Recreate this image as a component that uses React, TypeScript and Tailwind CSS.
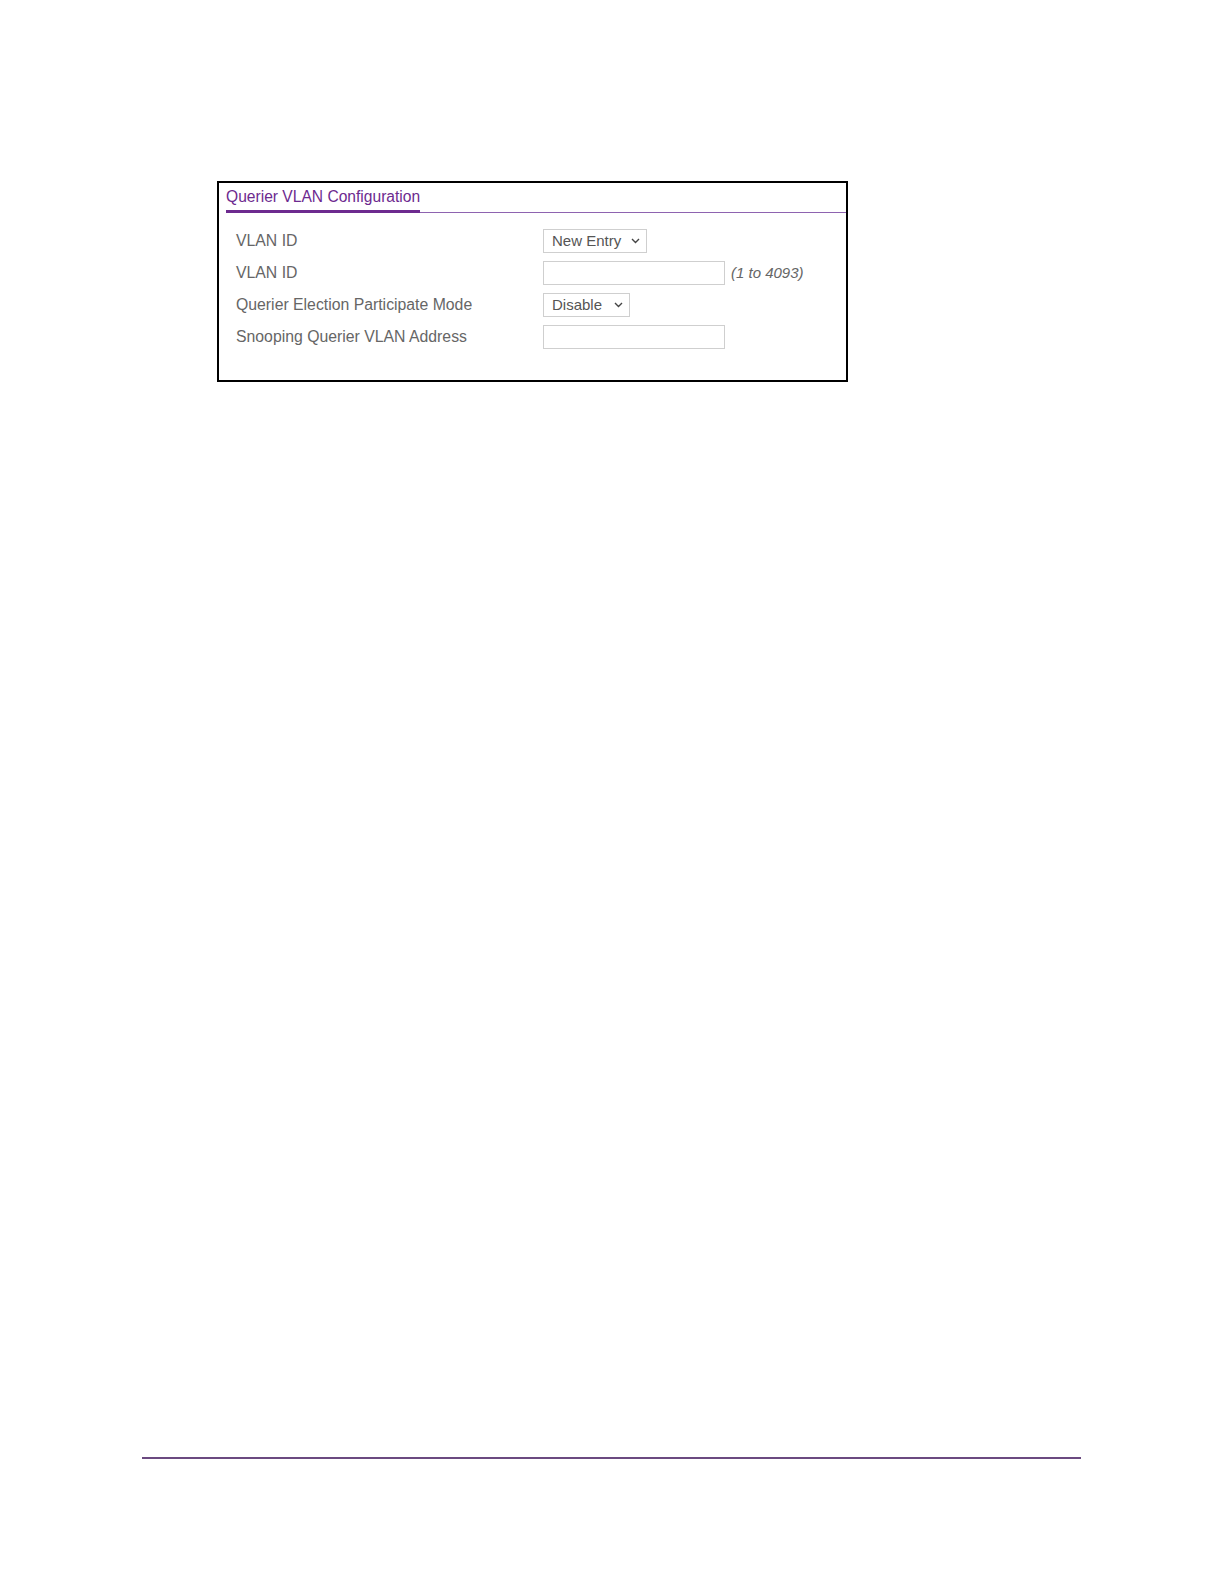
import React from "react";

function Chevron() {
  return (
    <svg width="9" height="6" viewBox="0 0 9 6" className="ml-auto">
      <path d="M1 1 L4.5 4.5 L8 1" fill="none" stroke="#444" strokeWidth="1.4" />
    </svg>
  );
}

function SelectBox({ label, width }: { label: string; width: string }) {
  return (
    <div
      className={`flex h-[24px] items-center border border-[#cfcfcf] bg-white pl-[8px] pr-[6px] text-[15px] text-[#555] ${width}`}
    >
      <span>{label}</span>
      <Chevron />
    </div>
  );
}

function TextBox() {
  return <div className="h-[24px] w-[182px] border border-[#cfcfcf] bg-white" />;
}

export default function App() {
  const font = { fontFamily: '"Liberation Sans", Arial, sans-serif' };
  return (
    <div className="min-h-[1584px] w-[1224px] bg-white" style={font}>
      <div className="pl-[217px] pt-[181px]">
        <div className="w-[631px] border-2 border-black">
          <div className="ml-[7px] flex border-b border-[#8e63b0] pt-[4px]">
            <span className="-mb-[1px] inline-block border-b-[3px] border-[#6d2a8f] pb-[3px] text-[15.6px] leading-[20px] text-[#6d2a8f]">
              Querier VLAN Configuration
            </span>
          </div>
          <div className="pb-[27px] pl-[17px] pt-[12px]">
            <div className="flex h-[32px] items-center">
              <div className="w-[307px] text-[15.8px] text-[#666]">VLAN ID</div>
              <SelectBox label="New Entry" width="w-[104px]" />
            </div>
            <div className="flex h-[32px] items-center">
              <div className="w-[307px] text-[15.8px] text-[#666]">VLAN ID</div>
              <TextBox />
              <span className="ml-[6px] text-[15px] italic text-[#666]">(1 to 4093)</span>
            </div>
            <div className="flex h-[32px] items-center">
              <div className="w-[307px] text-[15.8px] text-[#666]">Querier Election Participate Mode</div>
              <SelectBox label="Disable" width="w-[87px]" />
            </div>
            <div className="flex h-[32px] items-center">
              <div className="w-[307px] text-[15.8px] text-[#666]">Snooping Querier VLAN Address</div>
              <TextBox />
            </div>
          </div>
        </div>
      </div>
      <div className="ml-[142px] mt-[1075px] h-[2px] w-[939px] bg-[#6b4a80]" />
    </div>
  );
}
